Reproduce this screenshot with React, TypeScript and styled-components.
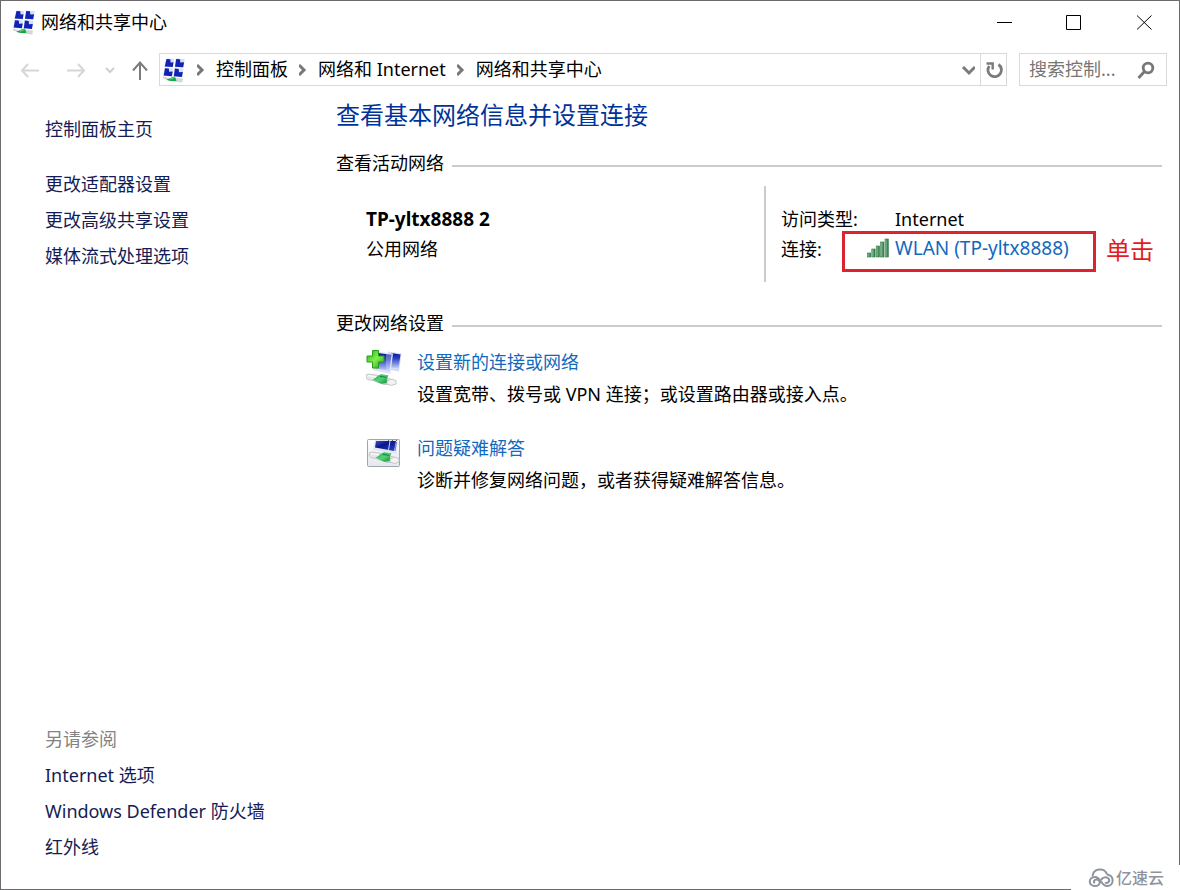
import React from "react";
import styled, { createGlobalStyle } from "styled-components";

const GlobalStyle = createGlobalStyle`
  *, *::before, *::after { box-sizing: border-box; }
  body { margin: 0; background: #fff; }
  body, button, input {
    font-family: "Noto Sans", "Noto Sans CJK SC", sans-serif;
    font-size: 18px;
    color: #000;
  }
  h1, h2, p, ul, ol, dl, dd { margin: 0; padding: 0; font-weight: 400; }
  ul, ol { list-style: none; }
  svg { display: block; flex: none; }
`;

const Window = styled.div`
  position: relative;
  display: flex;
  flex-direction: column;
  min-height: 100vh;
  border: 1px solid #6c6a6c;
  background: #fff;
`;

const TitleBar = styled.header`
  display: flex;
  align-items: center;
  height: 42px;
  padding-left: 11px;
`;

const WindowTitle = styled.h1`
  flex: 1;
  margin-left: 5px;
  font-size: 18px;
  line-height: 24px;
`;

const IconButton = styled.button<{ $width: number }>`
  display: flex;
  align-items: center;
  justify-content: center;
  flex: none;
  width: ${(p) => p.$width}px;
  height: 100%;
  padding: 0;
  border: 0;
  background: none;
`;

const NavBar = styled.nav`
  display: flex;
  align-items: stretch;
  height: 33px;
  margin: 10px 12px 0 6px;
`;

const AddressBar = styled.div`
  display: flex;
  flex: 1;
  align-items: center;
  min-width: 0;
  margin-right: 12px;
  padding-left: 2px;
  border: 1px solid #d9d9d9;
`;

const Crumbs = styled.ol`
  display: flex;
  flex: 1;
  align-items: center;
`;

const Crumb = styled.li`
  display: flex;
  align-items: center;
  white-space: nowrap;
`;

const CrumbSlot = styled.span`
  display: flex;
  justify-content: center;
  width: 30px;
`;

const CrumbLink = styled.a`
  padding-bottom: 2px;
  color: #000;
  line-height: 24px;
  text-decoration: none;
`;

const RefreshCell = styled.div`
  height: 100%;
  border-left: 1px solid #d9d9d9;
`;

const SearchBox = styled.label`
  display: flex;
  align-items: center;
  width: 148px;
  padding: 0 11px 0 9px;
  border: 1px solid #d9d9d9;
`;

const SearchInput = styled.input`
  flex: 1;
  min-width: 0;
  height: 24px;
  padding: 0 0 2px;
  border: 0;
  outline: 0;
  background: none;
  &::placeholder { color: #767676; opacity: 1; }
`;

const Body = styled.div`
  display: flex;
  flex: 1;
`;

const Sidebar = styled.aside`
  display: flex;
  flex-direction: column;
  justify-content: space-between;
  flex: none;
  width: 335px;
  padding: 25px 16px 24px 44px;
`;

const LinkList = styled.ul<{ $spaced?: boolean }>`
  margin-top: ${(p) => (p.$spaced ? 19 : 0)}px;
`;

const SideLink = styled.a`
  display: block;
  color: #151c55;
  line-height: 36px;
  text-decoration: none;
`;

const SideHeading = styled.h2`
  color: #838383;
  font-size: 18px;
  line-height: 36px;
`;

const Main = styled.main`
  flex: 1;
  min-width: 0;
  padding: 11px 17px 24px 0;
`;

const PageTitle = styled.h2`
  color: #003399;
  font-size: 24px;
  line-height: 36px;
`;

const SectionHeading = styled.h2<{ $top: number }>`
  display: flex;
  align-items: center;
  gap: 8px;
  margin-top: ${(p) => p.$top}px;
  font-size: 18px;
  line-height: 24px;
  &::after {
    content: "";
    flex: 1;
    height: 2px;
    margin-top: 6px;
    background: #cbcbcb;
  }
`;

const Network = styled.section`
  display: flex;
  margin-top: 11px;
`;

const NetworkName = styled.div`
  flex: 1;
  padding: 18px 0 0 30px;
  line-height: 30px;

  strong {
    display: block;
    font-size: 19px;
  }
`;

const Details = styled.dl`
  width: 398px;
  height: 96px;
  padding: 18px 0 0 15px;
  border-left: 2px solid #cbcbcb;
`;

const DetailRow = styled.div`
  position: relative;
  display: flex;
  line-height: 30px;
`;

const Term = styled.dt`
  width: 86px;
  white-space: nowrap;
`;

const Value = styled.dd<{ $indent?: boolean }>`
  padding-left: ${(p) => (p.$indent ? 28 : 0)}px;
`;

const ActionLink = styled.a<{ $large?: boolean }>`
  display: flex;
  align-items: center;
  gap: 6px;
  color: #1268bd;
  font-size: ${(p) => (p.$large ? 19 : 18)}px;
  line-height: ${(p) => (p.$large ? 28 : 32)}px;
  text-decoration: none;
  white-space: nowrap;
`;

const Highlight = styled.div`
  position: absolute;
  top: -3px;
  left: 61px;
  width: 254px;
  height: 41px;
  border: 3px solid #dc2430;
  pointer-events: none;
`;

const ClickNote = styled.span`
  position: absolute;
  top: 0;
  left: 325px;
  color: #e01c24;
  font-size: 24px;
  line-height: 32px;
  white-space: nowrap;
`;

const Tasks = styled.ul`
  display: flex;
  flex-direction: column;
  gap: 22px;
  margin-top: 11px;
  padding-left: 30px;
`;

const Task = styled.li`
  display: flex;
  gap: 15px;
  line-height: 32px;
`;

const Watermark = styled.div`
  position: absolute;
  right: -1px;
  bottom: -1px;
  display: flex;
  align-items: center;
  gap: 2px;
  width: 109px;
  height: 25px;
  padding-left: 17px;
  background: #fff;
  color: #8f939e;
  font-size: 16px;
  font-weight: 500;
  line-height: 24px;
`;

function Gradients() {
  return (
    <svg width="0" height="0" aria-hidden="true" style={{ position: "absolute" }}>
      <defs>
        <linearGradient id="screenDown" x1="0" y1="0" x2="0" y2="1">
          <stop offset="0" stopColor="#0b1590" />
          <stop offset="0.35" stopColor="#2a3fc4" />
          <stop offset="1" stopColor="#c3d2fa" />
        </linearGradient>
        <linearGradient id="screenDark" x1="0" y1="0" x2="1" y2="1">
          <stop offset="0" stopColor="#3c50b8" />
          <stop offset="0.4" stopColor="#0a1690" />
          <stop offset="1" stopColor="#2c46c8" />
        </linearGradient>
        <linearGradient id="cable" x1="0" y1="0" x2="1" y2="1">
          <stop offset="0" stopColor="#0fa045" />
          <stop offset="0.5" stopColor="#58d278" />
          <stop offset="1" stopColor="#078a36" />
        </linearGradient>
        <linearGradient id="plus" x1="0" y1="0" x2="1" y2="1">
          <stop offset="0" stopColor="#2fae1c" />
          <stop offset="0.5" stopColor="#7df04a" />
          <stop offset="1" stopColor="#249c17" />
        </linearGradient>
        <linearGradient id="bar" x1="0" y1="0" x2="1" y2="0">
          <stop offset="0" stopColor="#8fcf9f" />
          <stop offset="1" stopColor="#256f3c" />
        </linearGradient>
        <linearGradient id="frame" x1="0" y1="0" x2="0" y2="1">
          <stop offset="0" stopColor="#ffffff" />
          <stop offset="1" stopColor="#e4e7ee" />
        </linearGradient>
      </defs>
    </svg>
  );
}

function NetworkIcon() {
  return (
    <svg width="24" height="26" viewBox="0 0 24 26" aria-hidden="true">
      <path d="M4 1.500l8 .6-1.200 8.400-8.500-.7zM13.500 1.500l9.300.5-1.400 8.700-8.700-.5zM2.500 10.700l8.700.7-1.200 8.300-8.800-.9zM12.500 11.100l9 .5-1.200 8.400-8.700-.7z" fill="#d7e0f5" />
      <path d="M4.500 2l3.800.3.300 3.200 2.900-.3-.7 4.900-8-.7zM14.200 2l3.800.3.300 3.300 3.800-.3-.9 5-8.200-.5zM3 11.200l3.800.3.300 3.200 3.600-.2-.8 4.700-8.200-.8zM12.900 11.600l3.800.3.300 3.300 3.800-.3-.9 5-8.100-.7z" fill="#1122b4" />
      <path d="M1 19.500l5 1.200 3 .6 7-.3 5 .4-.7 4.100-5.800-.4-6.500-1.700-7-1.900z" fill="#d4d8d9" />
      <path d="M4 22.400c4 .2 5.500-3.200 9-2.600l1.500 3.900c-4 .8-7 .3-10.500-1.300z" fill="#12a843" />
      <path d="M8 22c2 0 3-1.400 4.500-1.300" stroke="#7fe099" fill="none" />
    </svg>
  );
}

function Connector() {
  return (
    <>
      <path d="M0 3.500Q0 .5 3 1l10 1.500 14 4.500v4l-9 .5L7 7.500 1.500 6.500Q0 5.500 0 3.500z" fill="#e4e8e7" stroke="#b9bfbe" strokeWidth="0.800" />
      <path d="M2 2.600l8 1.200" stroke="#fff" />
      <path d="M6.500 6.200c3-.2 5.500-4.700 9-5l7 1-1.500 3.800 1.500 4-7 .8c-3-.7-6-2.600-9-4.600z" fill="url(#cable)" />
      <path d="M14 3.500l6.500.8" stroke="#0a7c32" />
      <path d="M21 8l4-2 5 1.500v3.500l-4.500 1.500-4.500-1.500z" fill="#f1f3f3" stroke="#b9bfbe" strokeWidth="0.800" />
    </>
  );
}

function NewConnectionIcon() {
  return (
    <svg width="36" height="42" viewBox="0 -4 36 42" aria-hidden="true">
      <path d="M22 1.500l13.500 2-2.500 18-12-2z" fill="#d4dcf4" />
      <path d="M25 3l9.500 1.400-2 14-8.500-1z" fill="url(#screenDown)" />
      <path d="M10 1.500l17 2-2.500 20.500L7.500 20.500z" fill="#dfe5f6" />
      <path d="M11.500 3l14 1.700-2.200 16.300L9.500 18.500z" fill="url(#screenDown)" />
      <path d="M20 4l5.500.7-2.200 16.300-3.300-.6z" fill="#dbe5ff" opacity="0.350" />
      <g transform="translate(0 23)"><Connector /></g>
      <path d="M6.500 .5h6V6H18v6h-5.500v6h-6v-6H1V6h5.500z" fill="url(#plus)" stroke="#289c1b" />
    </svg>
  );
}

function TroubleshootIcon() {
  return (
    <svg width="36" height="40" viewBox="0 -2 36 40" aria-hidden="true">
      <rect x="1.500" y="5.500" width="32" height="27" rx="1" fill="url(#frame)" stroke="#a2a5aa" />
      <path d="M9 6h23l-1.500 14L7 16z" fill="#e3e8f5" />
      <path d="M10 7h20l-2 10-19-3.500z" fill="url(#screenDark)" />
      <path d="M24 7l-1.500 9" stroke="#c7d1f2" />
      <path d="M30.500 8l-1.500 9" stroke="#6b7bbf" />
      <g transform="translate(3 17)"><Connector /></g>
      <path d="M22 6.500h1M26 6.500h1M30 6.500h1" stroke="#666" />
    </svg>
  );
}

function SignalIcon() {
  const bars = [4, 8, 11, 15, 18];
  return (
    <svg width="22" height="20" viewBox="0 0 22 20" aria-hidden="true">
      {bars.map((h, i) => (
        <rect key={h} x={i * 4.4 + 0.4} y={19 - h} width="3.300" height={h} fill="url(#bar)" stroke="#34764a" strokeWidth="0.600" />
      ))}
    </svg>
  );
}

function Arrow({ d, width, color, stroke = 2 }: { d: string; width: number; color: string; stroke?: number }) {
  return (
    <svg width={width} height="20" viewBox={`0 0 ${width} 20`} fill="none" stroke={color} strokeWidth={stroke} aria-hidden="true">
      <path d={d} />
    </svg>
  );
}

function WindowControl({ label, d }: { label: string; d: string }) {
  return (
    <IconButton $width={70} aria-label={label}>
      <svg width="16" height="16" viewBox="0 0 16 16" fill="none" stroke="#000" aria-hidden="true">
        <path d={d} />
      </svg>
    </IconButton>
  );
}

const crumbs = ["控制面板", "网络和 Internet", "网络和共享中心"];
const settings = ["更改适配器设置", "更改高级共享设置", "媒体流式处理选项"];
const related = ["Internet 选项", "Windows Defender 防火墙", "红外线"];
const tasks = [
  {
    title: "设置新的连接或网络",
    text: "设置宽带、拨号或 VPN 连接；或设置路由器或接入点。",
    icon: <NewConnectionIcon />,
  },
  {
    title: "问题疑难解答",
    text: "诊断并修复网络问题，或者获得疑难解答信息。",
    icon: <TroubleshootIcon />,
  },
];

export default function App() {
  return (
    <Window>
      <GlobalStyle />
      <Gradients />
      <TitleBar>
        <NetworkIcon />
        <WindowTitle>网络和共享中心</WindowTitle>
        <WindowControl label="最小化" d="M1 8.500h15" />
        <WindowControl label="最大化" d="M.5 1.500h14v14H.5z" />
        <WindowControl label="关闭" d="M1 1.500l14.500 14M15.500 1.500L1 15.500" />
      </TitleBar>

      <NavBar>
        <IconButton $width={46} aria-label="后退">
          <Arrow width={20} color="#d6d6d6" d="M8 4l-6 6.500 6 6.500M2 10.500h17" />
        </IconButton>
        <IconButton $width={46} aria-label="前进">
          <Arrow width={20} color="#d6d6d6" d="M12 4l6 6.500-6 6.500M18 10.500H1" />
        </IconButton>
        <IconButton $width={22} aria-label="最近位置">
          <Arrow width={10} color="#d0d0d0" d="M1 8l4 4 4-4" />
        </IconButton>
        <IconButton $width={38} aria-label="上移">
          <Arrow width={18} color="#7c7c7c" d="M2 10.500l7-8 7 8M9 3v18" />
        </IconButton>
        <AddressBar>
          <NetworkIcon />
          <Crumbs>
            {crumbs.map((name) => (
              <Crumb key={name}>
                <CrumbSlot>
                  <Arrow width={8} stroke={3} color="#777" d="M0 5l5 5-5 5" />
                </CrumbSlot>
                <CrumbLink href="#">{name}</CrumbLink>
              </Crumb>
            ))}
          </Crumbs>
          <IconButton $width={24} aria-label="历史记录">
            <Arrow width={14} stroke={3} color="#7b7b7b" d="M2 7l6 6 6-6" />
          </IconButton>
          <RefreshCell>
            <IconButton $width={25} aria-label="刷新">
              <svg width="18" height="20" viewBox="0 0 18 20" fill="none" stroke="#7b7b7b" strokeWidth="2.800" aria-hidden="true">
                <path d="M13.500 4.500A6.700 6.700 0 1 1 4.300 6" />
                <path d="M1.500 3.500h6.200v6" strokeWidth="2.400" />
              </svg>
            </IconButton>
          </RefreshCell>
        </AddressBar>
        <SearchBox>
          <SearchInput type="search" aria-label="搜索控制面板" placeholder="搜索控制..." />
          <svg width="18" height="18" viewBox="0 0 18 18" fill="none" stroke="#777" strokeWidth="2.800" aria-hidden="true">
            <circle cx="11" cy="7" r="4.800" />
            <path d="M7.500 10.500L1.500 17" />
          </svg>
        </SearchBox>
      </NavBar>

      <Body>
        <Sidebar>
          <div>
            <SideLink href="#">控制面板主页</SideLink>
            <LinkList $spaced>
              {settings.map((name) => (
                <li key={name}>
                  <SideLink href="#">{name}</SideLink>
                </li>
              ))}
            </LinkList>
          </div>
          <div>
            <SideHeading>另请参阅</SideHeading>
            <LinkList>
              {related.map((name) => (
                <li key={name}>
                  <SideLink href="#">{name}</SideLink>
                </li>
              ))}
            </LinkList>
          </div>
        </Sidebar>

        <Main>
          <PageTitle>查看基本网络信息并设置连接</PageTitle>
          <SectionHeading $top={18}>查看活动网络</SectionHeading>
          <Network>
            <NetworkName>
              <strong>TP-yltx8888 2</strong>
              <p>公用网络</p>
            </NetworkName>
            <Details>
              <DetailRow>
                <Term>访问类型:</Term>
                <Value $indent>Internet</Value>
              </DetailRow>
              <DetailRow>
                <Term>连接:</Term>
                <Value>
                  <ActionLink href="#" $large>
                    <SignalIcon />
                    WLAN (TP-yltx8888)
                  </ActionLink>
                </Value>
                <Highlight />
                <ClickNote>单击</ClickNote>
              </DetailRow>
            </Details>
          </Network>

          <SectionHeading $top={29}>更改网络设置</SectionHeading>
          <Tasks>
            {tasks.map((task) => (
              <Task key={task.title}>
                {task.icon}
                <div>
                  <ActionLink href="#">{task.title}</ActionLink>
                  <p>{task.text}</p>
                </div>
              </Task>
            ))}
          </Tasks>
        </Main>
      </Body>

      <Watermark>
        <svg width="26" height="20" viewBox="0 0 26 20" fill="none" stroke="#8f939e" strokeWidth="2" aria-hidden="true">
          <path d="M4.500 8.500C5 0 17 -1 19 6.500" />
          <path d="M19 6.500c7.500.5 7.500 11.500 0 11.500-6 0-6-9-12-9-7 0-7 9 0 9 6 0 6-6.500 1.500-6.500-2.500 0-3.500 2.500-1.500 3.500" />
          <path d="M13 12c1.500-3 5.500-3.500 7.500-1.500 2 2.500-1 5.500-3.500 4" />
        </svg>
        亿速云
      </Watermark>
    </Window>
  );
}
